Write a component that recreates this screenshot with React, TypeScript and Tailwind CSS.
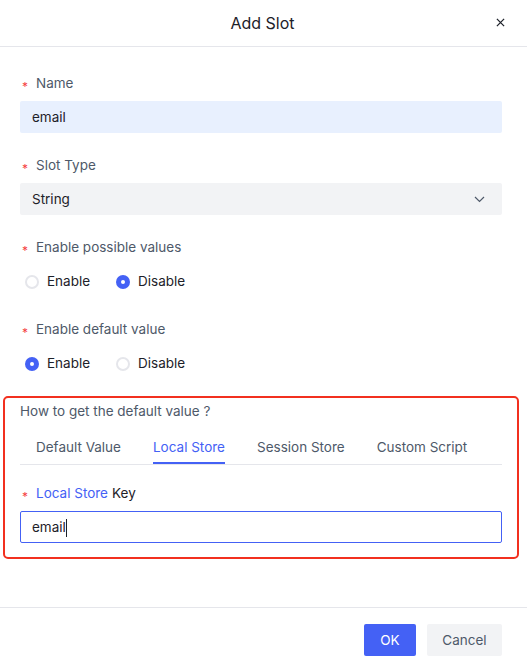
import React from "react";

const BLUE = "text-[#4461f5]";

function Req() {
  return (
    <span className="inline-block w-[16px] pl-[2px] text-[12px] leading-none text-[#f53f3f] translate-y-[4px]">
      *
    </span>
  );
}

function Label({ children }: { children: React.ReactNode }) {
  return (
    <div className="flex items-center h-[22px] pt-[2px] text-[13.5px] text-[#4e5969]">
      <Req />
      <span>{children}</span>
    </div>
  );
}

function Radio({ checked, label }: { checked: boolean; label: string }) {
  return (
    <div className="flex items-center">
      {checked ? (
        <span className="w-[14px] h-[14px] rounded-full bg-[#4461f5] flex items-center justify-center">
          <span className="w-[4px] h-[4px] rounded-full bg-white" />
        </span>
      ) : (
        <span className="w-[14px] h-[14px] rounded-full border-2 border-[#e5e6eb] bg-white" />
      )}
      <span className="ml-[8px] text-[13.5px] text-[#1d2129]">{label}</span>
    </div>
  );
}

function RadioRow({ first }: { first: boolean }) {
  return (
    <div className="flex items-center h-[32px] pt-[1px] pl-[5px] gap-[26px]">
      <Radio checked={first} label="Enable" />
      <Radio checked={!first} label="Disable" />
    </div>
  );
}

export default function App() {
  return (
    <div
      className="w-[527px] h-[672px] bg-white flex flex-col overflow-hidden"
      style={{ fontFamily: "Inter, 'Noto Sans', sans-serif" }}
    >
      {/* header */}
      <div className="h-[47px] border-b border-[#e5e6eb] flex items-center justify-center relative shrink-0 pr-[2px]">
        <span className="text-[16px] font-normal text-[#1d2129]">Add Slot</span>
        <svg
          className="absolute right-[22px] top-[18px]"
          width="9"
          height="9"
          viewBox="0 0 10 10"
        >
          <path d="M1 1L9 9M9 1L1 9" stroke="#1d2129" strokeWidth="1.4" />
        </svg>
      </div>

      {/* body */}
      <div className="pl-[20px] pr-[25px] pt-[24px] flex flex-col">
        <Label>Name</Label>
        <div className="mt-[8px] h-[32px] pt-[1px] rounded-[2px] bg-[#e8f0fe] flex items-center px-[12px] text-[13.5px] text-[#1d2129]">
          email
        </div>

        <div className="mt-[20px]">
          <Label>Slot Type</Label>
        </div>
        <div className="mt-[8px] h-[32px] pt-[1px] rounded-[2px] bg-[#f2f3f5] flex items-center justify-between px-[12px] text-[13.5px] text-[#1d2129]">
          <span>String</span>
          <svg width="11" height="7" viewBox="0 0 11 7" className="mr-[5px]">
            <path d="M1 1L5.5 5.5L10 1" stroke="#4e5969" strokeWidth="1.2" fill="none" />
          </svg>
        </div>

        <div className="mt-[20px]">
          <Label>Enable possible values</Label>
        </div>
        <div className="mt-[8px]">
          <RadioRow first={false} />
        </div>

        <div className="mt-[20px]">
          <Label>Enable default value</Label>
        </div>
        <div className="mt-[8px]">
          <RadioRow first={true} />
        </div>

        {/* highlighted section */}
        <div className="mt-[17px] -mx-[17px] px-[15px] pt-[1px] pb-[14px] border-2 border-[#f2301f] rounded-[5px]">
          <div className="h-[22px] pt-[2px] flex items-center text-[13.5px] text-[#4e5969]">
            How to get the default value ?
          </div>
          <div className="mt-[8px] h-[36px] flex border-b border-[#e5e6eb] text-[13.5px]">
            {["Default Value", "Local Store", "Session Store", "Custom Script"].map((t) => {
              const active = t === "Local Store";
              return (
                <div key={t} className="px-[16px] h-full flex">
                  <span
                    className={
                      active
                        ? "h-full pt-[3px] flex items-center border-b-2 border-[#4461f5] text-[#4461f5]"
                        : "h-full pt-[3px] pb-[2px] flex items-center text-[#4e5969]"
                    }
                  >
                    {t}
                  </span>
                </div>
              );
            })}
          </div>
          <div className="mt-[16px] flex items-center h-[22px] pt-[2px] text-[13.5px]">
            <Req />
            <span className={BLUE}>Local Store</span>
            <span className="ml-[4px] text-[#1d2129]">Key</span>
          </div>
          <div className="mt-[8px] h-[32px] pt-[1px] rounded-[2px] border border-[#4461f5] flex items-center px-[11px] text-[13.5px] text-[#1d2129]">
            <span>email</span>
            <span className="w-px h-[18px] bg-[#1d2129]" />
          </div>
        </div>
      </div>

      <div className="flex-1" />

      {/* footer */}
      <div className="border-t border-[#e5e6eb] h-[65px] flex items-center justify-end gap-[11px] pl-[20px] pr-[25px] shrink-0">
        <div className="w-[52px] h-[32px] pt-[1px] rounded-[2px] bg-[#4461f5] text-white text-[13.5px] flex items-center justify-center">
          OK
        </div>
        <div className="w-[75px] h-[32px] pt-[1px] rounded-[2px] bg-[#f2f3f5] text-[#4e5969] text-[13.5px] flex items-center justify-center">
          Cancel
        </div>
      </div>
    </div>
  );
}
